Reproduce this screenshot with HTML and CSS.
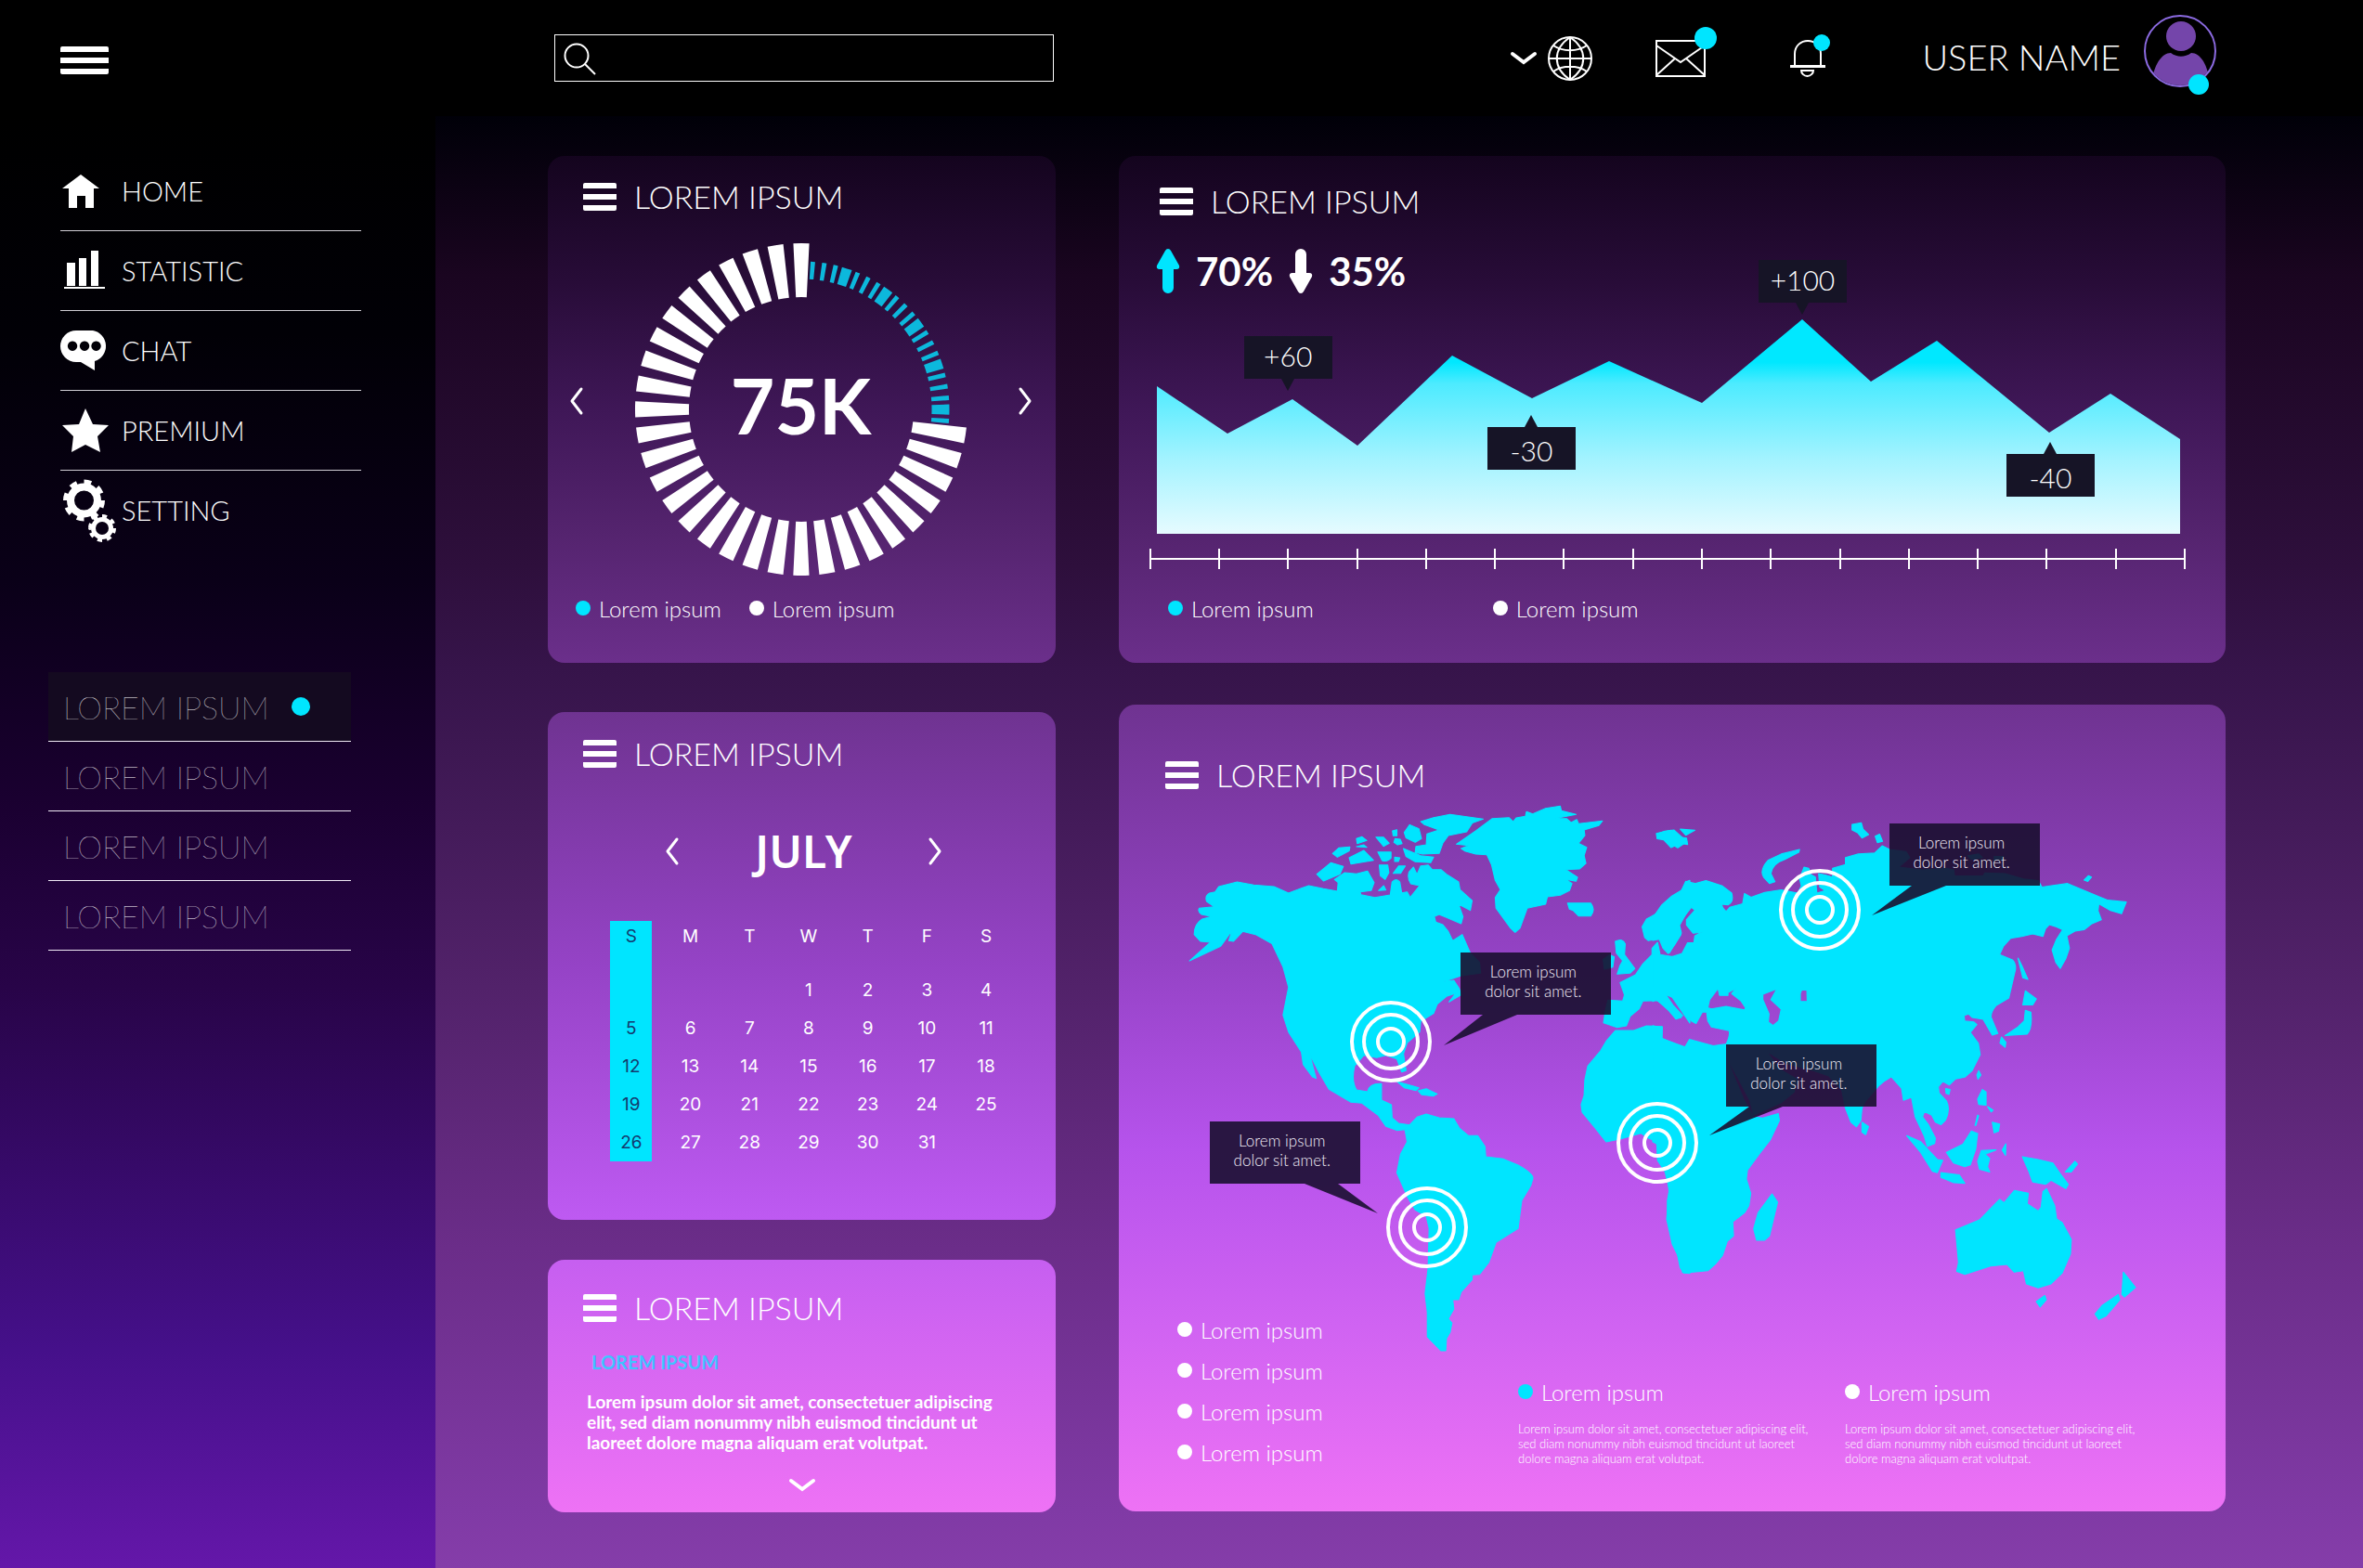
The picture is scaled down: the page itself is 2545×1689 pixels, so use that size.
FILE: index.html
```html
<!DOCTYPE html>
<html lang="en">
<head>
<meta charset="utf-8">
<title>Dashboard</title>
<link rel="stylesheet" href="styles.css">
</head>
<body>
<div class="app">
  <header class="topbar">
    <button class="icon-button topbar-menu" aria-label="Menu"><span class="burger burger-wide"></span></button>
    <form class="search" role="search">
      <svg class="search-icon" viewBox="0 0 36 36" aria-hidden="true"><circle cx="15" cy="15" r="12.5"/><path d="M24 24l11 11"/></svg>
      <input class="search-input" type="search" aria-label="Search">
    </form>
    <div class="topbar-tools">
      <button class="icon-button language" aria-label="Language">
        <svg class="chevron-down" viewBox="0 0 28 14" aria-hidden="true"><path d="M2 2l12 9 12-9"/></svg>
        <svg class="globe" viewBox="0 0 48 48" aria-hidden="true"><circle cx="24" cy="24" r="23"/><path d="M24 1v46M1 24h46M24 1C5 14 5 34 24 47M24 1c19 13 19 33 0 46M6 10c10 7 26 7 36 0M6 38c10-7 26-7 36 0"/></svg>
      </button>
      <button class="icon-button mail" aria-label="Messages">
        <svg viewBox="0 0 54 40" aria-hidden="true"><path d="M1 1h52v38H1zM1 6l26 18L53 6M1 38l20-18M53 38L33 20"/></svg>
        <span class="badge badge-mail"></span>
      </button>
      <button class="icon-button bell" aria-label="Notifications">
        <svg viewBox="0 0 40 40" aria-hidden="true"><path d="M6 28V15C6 6 13 1 20 1s14 5 14 14v13"/><path class="bell-rim" d="M1 28.500h38"/><path d="M13 33h13c0 3-3 6-6.500 6S13 36 13 33z"/></svg>
        <span class="badge badge-bell"></span>
      </button>
      <a class="user" href="#profile">
        <span>USER NAME</span>
        <span class="avatar">
          <svg viewBox="0 0 78 78" aria-hidden="true"><defs><clipPath id="face"><circle cx="39" cy="39" r="37"/></clipPath></defs><g clip-path="url(#face)"><circle cx="40" cy="23" r="16"/><path d="M8 80C9 55 19 41 29 41c7 5 15 5 22 0 10 0 20 14 20 39z"/></g><circle class="avatar-ring" cx="39" cy="39" r="38"/></svg>
          <span class="badge badge-user"></span>
        </span>
      </a>
    </div>
  </header>

  <aside class="sidebar">
    <nav aria-label="Main">
      <ul class="nav">
        <li><a href="#home"><svg viewBox="65 170 60 52" aria-hidden="true"><path d="M87 178l20 15h-6v21h-9v-13h-9v13h-9v-21h-7z"/></svg>HOME</a></li>
        <li><a href="#statistic"><svg viewBox="65 260 60 52" aria-hidden="true"><path d="M72 277h9v25h-9zM85 272h8v30h-8zM98 264h8v38h-8zM69 303h44v2H69z"/></svg>STATISTIC</a></li>
        <li><a href="#chat"><svg viewBox="65 352 60 52" aria-hidden="true"><path fill-rule="evenodd" d="M82 356h18a17 17 0 0 1 2 33l0 10-15-9h-5a17 17 0 0 1 0-34zM78 367.500a5.200 5.200 0 1 0 .1 0zM91 367.500a5.200 5.200 0 1 0 .1 0zM103.500 367.500a5.200 5.200 0 1 0 .1 0z"/></svg>CHAT</a></li>
        <li><a href="#premium"><svg viewBox="65 433 60 52" aria-hidden="true"><path d="M92 435l8 17 17 1-12 12 3 17-16-8-15 8 2-17-12-12 18-1z"/></svg>PREMIUM</a></li>
        <li><a href="#setting"><svg class="gears" viewBox="65 518 60 72" aria-hidden="true"><circle cx="90.500" cy="543" r="14.500" stroke-width="8"/><circle cx="90.500" cy="543" r="20" stroke-width="5" pathLength="16" stroke-dasharray="1 1"/><circle cx="110" cy="573" r="9.500" stroke-width="5"/><circle cx="110" cy="573" r="13" stroke-width="4" pathLength="16" stroke-dasharray="1 1"/></svg>SETTING</a></li>
      </ul>
    </nav>
    <nav aria-label="Sections">
      <ul class="subnav">
        <li><a class="current" href="#one">LOREM IPSUM<span class="dot"></span></a></li>
        <li><a href="#two">LOREM IPSUM</a></li>
        <li><a href="#three">LOREM IPSUM</a></li>
        <li><a href="#four">LOREM IPSUM</a></li>
      </ul>
    </nav>
  </aside>

  <main class="content">
    <div class="column column-narrow">
      <section class="card card-gauge">
        <h2 class="card-title"><span class="burger"></span>LOREM IPSUM</h2>
        <div class="gauge">
          <button class="icon-button" aria-label="Previous"><svg class="chevron-side" viewBox="0 0 14 30" aria-hidden="true"><path d="M12 2L2 15l10 13"/></svg></button>
          <div class="gauge-dial">
            <svg viewBox="-180 -179 360 358" aria-hidden="true">
              <path class="gauge-rest" pathLength="91.800" d="M9.420-149.700A150 150 0 0 1 149.330 14.120"/>
              <path class="gauge-value" pathLength="266.500" d="M149.100 16.330A150 150 0 1 1 7.200-149.830"/>
            </svg>
            <strong class="gauge-number">75K</strong>
          </div>
          <button class="icon-button" aria-label="Next"><svg class="chevron-side" viewBox="0 0 14 30" aria-hidden="true"><path d="M2 2l10 13L2 28"/></svg></button>
        </div>
        <ul class="legend legend-gauge">
          <li><span class="dot dot-cyan"></span>Lorem ipsum</li>
          <li><span class="dot"></span>Lorem ipsum</li>
        </ul>
      </section>

      <section class="card card-calendar">
        <h2 class="card-title"><span class="burger"></span>LOREM IPSUM</h2>
        <div class="month">
          <button class="icon-button" aria-label="Previous month"><svg class="chevron-side" viewBox="0 0 14 30" aria-hidden="true"><path d="M12 2L2 15l10 13"/></svg></button>
          <h3>JULY</h3>
          <button class="icon-button" aria-label="Next month"><svg class="chevron-side" viewBox="0 0 14 30" aria-hidden="true"><path d="M2 2l10 13L2 28"/></svg></button>
        </div>
        <table class="days">
          <thead><tr><th>S</th><th>M</th><th>T</th><th>W</th><th>T</th><th>F</th><th>S</th></tr></thead>
          <tbody>
            <tr><td></td><td></td><td></td><td>1</td><td>2</td><td>3</td><td>4</td></tr>
            <tr><td>5</td><td>6</td><td>7</td><td>8</td><td>9</td><td>10</td><td>11</td></tr>
            <tr><td>12</td><td>13</td><td>14</td><td>15</td><td>16</td><td>17</td><td>18</td></tr>
            <tr><td>19</td><td>20</td><td>21</td><td>22</td><td>23</td><td>24</td><td>25</td></tr>
            <tr><td>26</td><td>27</td><td>28</td><td>29</td><td>30</td><td>31</td><td></td></tr>
          </tbody>
        </table>
      </section>

      <section class="card card-note">
        <h2 class="card-title"><span class="burger"></span>LOREM IPSUM</h2>
        <h3 class="note-heading">LOREM IPSUM</h3>
        <p class="note-text">Lorem ipsum dolor sit amet, consectetuer adipiscing<br>elit, sed diam nonummy nibh euismod tincidunt ut<br>laoreet dolore magna aliquam erat volutpat.</p>
        <button class="icon-button note-more" aria-label="Show more"><svg class="chevron-down" viewBox="0 0 28 14" aria-hidden="true"><path d="M2 2l12 9 12-9"/></svg></button>
      </section>
    </div>

    <div class="column column-wide">
      <section class="card card-chart">
        <h2 class="card-title"><span class="burger"></span>LOREM IPSUM</h2>
        <div class="trends">
          <svg class="trend-up" viewBox="0 0 24 48" aria-hidden="true"><path d="M12 0q2 0 3 2l9 16q1 4-3 4h-3v20a6 6 0 0 1-12 0V22H3q-4 0-3-4L9 2q1-2 3-2z"/></svg>
          <strong>70%</strong>
          <svg class="trend-down" viewBox="0 0 24 48" aria-hidden="true"><path d="M12 48q2 0 3-2l9-16q1-4-3-4h-3V6a6 6 0 0 0-12 0v20H3q-4 0-3 4l9 16q1 2 3 2z"/></svg>
          <strong>35%</strong>
        </div>
        <div class="plot">
          <svg viewBox="1205 316 1192 304" aria-hidden="true">
            <defs><linearGradient id="area" gradientUnits="userSpaceOnUse" x1="0" y1="344" x2="0" y2="575"><stop offset="0.200" stop-color="#00e8ff"/><stop offset="0.300" stop-color="#4debff"/><stop offset="0.650" stop-color="#a3f3ff"/><stop offset="1" stop-color="#e6fbff"/></linearGradient></defs>
            <path fill="url(#area)" d="M1246 575V416L1322 467L1392 430L1462 480L1564 383L1650 429L1733 389L1833 434L1941 344L2015 411L2086 367L2207 466L2273 424L2348 473V575z"/>
            <path class="axis" d="M1238 602H2354M1239 591v22M1313 591v22M1387 591v22M1462 591v22M1536 591v22M1610 591v22M1684 591v22M1759 591v22M1833 591v22M1907 591v22M1982 591v22M2056 591v22M2130 591v22M2204 591v22M2279 591v22M2353 591v22"/>
          </svg>
          <span class="tip tip-a">+60</span>
          <span class="tip tip-b tip-below">-30</span>
          <span class="tip tip-c">+100</span>
          <span class="tip tip-d tip-below">-40</span>
        </div>
        <ul class="legend legend-chart">
          <li><span class="dot dot-cyan"></span>Lorem ipsum</li>
          <li><span class="dot"></span>Lorem ipsum</li>
        </ul>
      </section>

      <section class="card card-map">
        <h2 class="card-title"><span class="burger"></span>LOREM IPSUM</h2>
        <div class="map">
          <svg viewBox="1205 860 1192 550" aria-hidden="true">
            <g class="land">
              <g transform="translate(1200 750) scale(.39541 .33333)">
                <path d="M205 855L262 795L235 792L218 770Q218 735 240 720L265 712L238 705Q226 695 232 685L272 680L252 663Q246 645 260 636L275 632L285 615L335 600L380 610L435 615L475 636L510 620L530 612L570 622L608 630L610 602L600 592L628 570L660 574L690 565L708 602L700 628L670 632L672 641L710 650L752 642L757 600Q768 585 778 600L783 635L798 632L806 650L832 612L808 606Q798 590 803 568L815 552L825 576L835 548L855 545L866 560L890 560L905 575L938 600L942 625L975 660L970 692L938 672L950 712L945 735L905 715L885 705L872 712L876 730L895 738L910 760L922 790L948 770L970 830L995 860L998 895L945 903L898 922L925 918L940 945L945 965L912 988L930 960L905 970L880 995L870 1025L835 1050L832 1085L798 1120L788 1155L795 1210L783 1214L770 1172L740 1160L715 1168L680 1160L655 1195Q645 1240 660 1272L690 1278Q695 1250 728 1252L728 1305L755 1320L757 1362L775 1380L805 1385L825 1360L850 1350L885 1362L925 1365L940 1395L965 1420L990 1420L1010 1455L1012 1488L1060 1495L1100 1515Q1145 1545 1140 1560L1135 1580L1110 1630L1100 1720L1040 1765L1020 1830L995 1868L975 1870L975 1885L945 1925L938 1950L922 1950L925 1980L910 2012L920 2025L915 2055L905 2075L903 2115L890 2115L853 2070L853 1990L847 1930L855 1850L858 1720L850 1680L820 1660L800 1620L770 1540L780 1480L798 1440L792 1400L770 1403L740 1390L720 1355L675 1315L645 1312L585 1270L558 1215L532 1155L550 1235L540 1230L515 1190L510 1150L475 1085L460 1030L475 940L460 875L430 800L385 770L350 760L325 792L312 790L322 755L290 808z"/>
                <path d="M932 478L985 435L1030 395L1075 392L1087 405L1095 393L1120 388L1123 373L1140 380L1175 362L1215 355L1218 370L1258 382L1200 395L1232 395L1245 408L1260 398L1265 412L1330 403L1320 418L1280 432L1282 450L1265 475L1287 488L1280 515L1285 540L1268 558L1230 560L1262 585L1258 598L1230 592L1247 605L1240 628L1215 643L1180 648L1175 672L1125 685L1105 750L1092 763L1080 750L1040 685L1038 650L1052 625L1038 595L1028 545L1015 512L985 510L955 500L945 492L965 482z"/>
                <path d="M835 405L870 392L915 382L1005 397L975 410L960 438L910 450L895 475L885 508L840 510L820 505L822 485L850 480L852 445L885 432L845 415zM790 440L805 415L830 428L837 460L820 472L795 458zM758 435l12-4v20h-10zM713 455l20 0l16 20l-15 10zM765 460l14 2l5 14l-12 4l-10-8zM660 460l15-6l13 12l-26 10zM660 486l20-6l8 8zM595 508L612 490L642 487L640 500L608 520zM640 522L680 498L706 530L645 542zM718 503h36v20q-10 14-24 8zM764 520l14 2l-4 12h-10zM788 492L835 515L870 520L862 538L820 535L795 518zM552 575L590 538L624 550L615 575L570 597zM722 545L745 545L748 570L738 592L725 580zM760 572L775 548L793 548L780 572zM720 628l14-16l6 14zM770 1245L830 1265L822 1274L790 1265zM828 1275L850 1268L880 1285L870 1292L838 1288zM1235 668L1298 668Q1312 690 1298 710L1265 710L1250 692L1240 688zM1365 792Q1385 780 1392 800L1390 835L1418 880L1405 895L1370 898L1378 870L1385 855L1368 830zM1332 850L1350 835L1362 842L1358 875L1335 882zM1478 445L1500 436L1525 432L1560 470L1535 490L1500 465z"/>
                <path d="M1568 595L1556 600L1540 640L1505 680L1480 700L1450 720L1438 745L1445 780L1455 790L1490 780L1512 830L1545 765L1540 740L1568 680zM1568 825L1530 843L1487 835L1480 795L1465 815L1465 835L1440 865L1420 900L1378 925L1390 965L1385 985L1345 982L1338 1015L1333 1055L1370 1070L1395 1065L1405 1035L1430 1010L1440 985L1480 983L1510 1015L1530 1043L1545 1038L1530 1010L1508 985L1502 963L1520 973L1568 1056zM1568 1120L1553 1135L1492 1105L1493 1067L1450 1065L1415 1080L1365 1080L1340 1115L1325 1145L1290 1195L1282 1240L1280 1290L1272 1320L1275 1345L1310 1395L1340 1440L1380 1430L1435 1412L1450 1425L1478 1440L1480 1500L1500 1535L1512 1590L1505 1690L1520 1770L1545 1830L1548 1862L1568 1865z"/>
              </g>
              <g transform="translate(1780 830) scale(.39541 .38265)">
                <path fill-rule="evenodd" d="M0 415L25 378L50 355L90 330L90 312L115 318L145 310L190 325L215 345Q222 370 205 378L187 376L192 388L200 397L210 385L245 375L250 346L268 357L305 343L350 336L395 345L405 325L400 305L412 272L425 275L430 292L443 300L447 345L470 338L455 328L452 290L470 294L490 300L490 275L525 265L525 245L560 235L605 232L625 212L645 222L690 228L700 245L670 272L735 280L800 275L820 280L822 297L900 297L905 288L960 290L1010 305L1050 310L1060 328L1130 318L1165 333L1215 355L1240 365L1290 370L1277 403L1245 393L1215 375L1213 395L1222 420L1195 432L1175 448L1150 452L1128 465L1135 500L1125 530L1110 557L1098 540L1088 505L1100 475L1117 448L1100 440L1080 434L1070 445L1063 467L1035 460L1005 467L975 472L955 495L945 518L980 533Q990 545 988 560L970 640L935 662Q920 680 922 695L940 740L925 745L900 700L870 695L860 685L848 690L850 705L875 708L883 715L865 737L887 768L892 800L870 845L850 863L825 868L808 885L790 875L778 890L780 908L800 930Q812 955 797 985L785 997L770 990L760 970L740 960L735 975L750 995L770 1035L768 1050L748 1058L740 1030L715 975L705 920L683 928L678 895L650 862L630 875L615 888L580 930L570 950L567 985L555 1003L540 990L525 950L515 900L480 860L440 845L365 825L310 790L345 840L395 870L385 905L350 935L275 970L265 930L235 870L200 805L225 870L250 930L270 965L275 975L300 978L342 966L345 985L320 1040L290 1080L258 1125L255 1150L267 1190L262 1225L250 1245L218 1270L220 1310L203 1325L190 1365L170 1390L150 1408L85 1414L75 1400L62 1335L40 1260L40 1210L45 1185L35 1120L20 1080L10 1050L0 1045V718L25 725L25 755L88 778L100 757L165 775L200 770Q212 745 208 732L160 722L150 705L147 680L135 680L118 712L105 705L80 665L60 640L35 630L55 660L82 690L65 698L40 670L10 645L0 650V525L50 525L80 515L95 485L112 485L115 465L135 455L110 458L92 435L92 420L115 393L105 385L75 425L68 438L77 462L60 490L42 515L28 500L18 475L0 478zM150 668L155 645L178 613L182 633L205 633L205 625L228 612L215 628L240 648L253 668L250 674L200 664L160 671zM300 630L338 615L322 645L350 672L343 705L328 718L315 708L317 685L300 645zM402 628L406 617L420 618L421 650H402z"/>
                <path d="M10 177L50 168L60 185L92 190L95 208L75 205L50 217L30 195L12 192zM75 165L115 168L90 182zM400 222L350 235L315 252Q290 280 302 300L318 318L333 313L322 290Q325 262 360 250L398 230zM543 152l25-5l5 18l15 15l-18 10l-12-15l-15-8zM606 185l12-6l8 20l-14 4zM858 240l30-5l10 10l-30 5zM930 242h25v10h-25zM1175 308l12-12l8 4l-10 12zM995 528L1005 548L1022 588L1008 583zM1015 620L1045 643L1035 660L1008 660zM1015 675L1030 680Q1035 725 1020 742L960 746L995 722L1012 705zM950 750l12 15l-2 14l-14-12zM888 845l6 12l-8 12l-3-12zM798 895l12 3l-3 14l-8-3zM885 925L898 898L908 905L908 942L888 940zM912 946l15 10l-5 5zM925 990L945 995L942 1015L930 1020zM885 970l3 2l-8 27h-2zM570 990L588 1002L580 1025L570 1018zM692 1028L730 1045L775 1095L790 1097L775 1132L762 1128L730 1075zM785 1132L835 1138L850 1162L820 1160L785 1145zM800 1075L845 1052L868 1015L885 1022L880 1065L865 1110L850 1115L820 1105zM885 1100L895 1070L935 1068L905 1080L918 1092L912 1115L918 1130L890 1122zM952 1068l10-17l-1 32zM1007 1087L1050 1095L1090 1105L1110 1135L1132 1165L1125 1177L1085 1153L1070 1165L1035 1158L1025 1130zM1124 1130L1150 1100L1157 1108L1140 1130zM325 1192L340 1215L318 1310L305 1322L283 1322L275 1290L287 1245zM825 1293L890 1265L945 1207L957 1217L985 1182L1023 1190L1020 1220L1050 1240L1058 1230L1063 1185L1073 1177L1095 1225L1100 1262L1115 1272L1140 1320L1138 1360L1115 1415L1085 1445L1050 1456L1018 1445L1010 1408L985 1412L965 1390L920 1395L850 1418L828 1410L833 1385zM1045 1495L1068 1478L1072 1490L1055 1510zM1282 1412L1315 1455L1285 1482L1278 1475zM1268 1475L1272 1490L1235 1535L1215 1545L1205 1530L1225 1505z"/>
              </g>
            </g>
            <g class="rings">
              <g><circle cx="1498" cy="1122" r="42"/><circle cx="1498" cy="1122" r="29"/><circle cx="1498" cy="1122" r="14"/></g>
              <g><circle cx="1960" cy="980" r="42"/><circle cx="1960" cy="980" r="29"/><circle cx="1960" cy="980" r="14"/></g>
              <g><circle cx="1785" cy="1231" r="42"/><circle cx="1785" cy="1231" r="29"/><circle cx="1785" cy="1231" r="14"/></g>
              <g><circle cx="1537" cy="1322" r="42"/><circle cx="1537" cy="1322" r="29"/><circle cx="1537" cy="1322" r="14"/></g>
            </g>
            <path class="tails" d="M1597 1093L1555 1126L1634 1093zM2059 954L2016 986L2096 954zM1884 1192L1841 1223L1920 1192zM1405 1275L1484 1307L1441 1275z"/>
          </svg>
          <p class="callout callout-a">Lorem ipsum<br>dolor sit amet.</p>
          <p class="callout callout-b">Lorem ipsum<br>dolor sit amet.</p>
          <p class="callout callout-c">Lorem ipsum<br>dolor sit amet.</p>
          <p class="callout callout-d">Lorem ipsum<br>dolor sit amet.</p>
        </div>
        <div class="map-footer">
          <ul class="legend legend-map">
            <li><span class="dot"></span>Lorem ipsum</li>
            <li><span class="dot"></span>Lorem ipsum</li>
            <li><span class="dot"></span>Lorem ipsum</li>
            <li><span class="dot"></span>Lorem ipsum</li>
          </ul>
          <div class="map-note">
            <h3><span class="dot dot-cyan"></span>Lorem ipsum</h3>
            <p>Lorem ipsum dolor sit amet, consectetuer adipiscing elit,<br>sed diam nonummy nibh euismod tincidunt ut laoreet<br>dolore magna aliquam erat volutpat.</p>
          </div>
          <div class="map-note">
            <h3><span class="dot"></span>Lorem ipsum</h3>
            <p>Lorem ipsum dolor sit amet, consectetuer adipiscing elit,<br>sed diam nonummy nibh euismod tincidunt ut laoreet<br>dolore magna aliquam erat volutpat.</p>
          </div>
        </div>
      </section>
    </div>
  </main>
</div>
</body>
</html>
```

FILE: styles.css
```css
* { box-sizing: border-box; }

body {
  margin: 0;
  background: #000;
  color: #fff;
  font-family: Lato, "Open Sans", sans-serif;
  font-weight: 300;
}

h2, h3, p, ul { margin: 0; padding: 0; font-weight: inherit; }
ul { list-style: none; }
a { color: inherit; text-decoration: none; }
svg { display: block; overflow: visible; }

.app {
  display: grid;
  grid-template-columns: 469px 1fr;
  grid-template-rows: 125px auto;
  min-height: 100vh;
}

.icon-button {
  position: relative;
  display: flex;
  align-items: center;
  padding: 0;
  border: 0;
  background: none;
  color: inherit;
  cursor: pointer;
}
.icon-button svg { fill: none; stroke: #fff; stroke-width: 2; }
.icon-button .chevron-down { width: 28px; height: 14px; stroke-width: 4; stroke-linecap: round; }
.icon-button .chevron-side { width: 14px; height: 30px; stroke-width: 3; stroke-linecap: round; stroke-linejoin: round; }

.burger {
  display: block;
  width: 36px;
  height: 30px;
  background:
    linear-gradient(#fff, #fff) top / 100% 6px no-repeat,
    linear-gradient(#fff, #fff) center / 100% 6px no-repeat,
    linear-gradient(#fff, #fff) bottom / 100% 6px no-repeat;
  border-radius: 2px;
}
.burger-wide { width: 52px; }

.dot {
  flex: none;
  width: 16px;
  height: 16px;
  border-radius: 50%;
  background: #fff;
}
.dot-cyan { background: #00e5ff; }

.badge { position: absolute; border-radius: 50%; background: #00e5ff; }
.badge-mail { width: 24px; height: 24px; top: -14px; right: -12px; }
.badge-bell { width: 18px; height: 18px; top: -6px; right: -4px; }
.badge-user { width: 22px; height: 22px; right: 8px; bottom: -8px; }

/* Top bar */
.topbar {
  grid-column: 1 / -1;
  display: grid;
  grid-template-columns: 532px 538px 1fr;
  align-items: center;
  padding: 0 158px 0 65px;
  background: #000;
}
.topbar-menu { justify-self: start; padding-top: 5px; }
.search {
  display: flex;
  align-items: center;
  height: 51px;
  padding-left: 8px;
  border: 1px solid #fff;
}
.search-icon { width: 36px; height: 36px; fill: none; stroke: #fff; stroke-width: 2; }
.search-input {
  flex: 1;
  min-width: 0;
  height: 44px;
  padding: 0 12px;
  border: 0;
  outline: 0;
  background: none;
  color: #fff;
  font: inherit;
  font-size: 24px;
}
.topbar-tools { display: flex; align-items: center; justify-content: flex-end; }
.language { gap: 12px; margin-right: 68px; }
.language .globe { width: 48px; height: 48px; }
.mail { margin-right: 90px; }
.mail svg { width: 54px; height: 40px; }
.bell { margin-right: 103px; }
.bell svg { width: 40px; height: 40px; }
.bell .bell-rim { stroke-width: 3; }
.user { display: flex; align-items: center; gap: 25px; margin-bottom: 16px; font-size: 38px; line-height: 78px; }
.user > :first-child { padding-top: 12px; }
.avatar { position: relative; }
.avatar svg { width: 78px; height: 78px; fill: #7445aa; }
.avatar .avatar-ring { fill: none; stroke: #8b6ae0; stroke-width: 2; }

/* Sidebar */
.sidebar {
  padding: 38px 80px 60px 52px;
  background: linear-gradient(#000 0, #010006 15%, #0a0018 32%, #1a0030 47%, #280448 60%, #45108a 85%, #6417a9 100%);
}
.nav { margin-left: 13px; }
.nav li + li { border-top: 1px solid #d0ced4; }
.nav a { display: flex; align-items: center; gap: 6px; height: 85px; font-size: 29px; }
.nav svg { width: 60px; height: 52px; fill: #fff; }
.nav .gears { height: 72px; fill: none; stroke: #fff; }
.subnav { width: 326px; margin-top: 132px; }
.subnav a {
  display: flex;
  align-items: center;
  gap: 24px;
  height: 75px;
  padding-left: 16px;
  border-bottom: 1px solid #f0eaf5;
  color: #fff;
  font-size: 34px;
  font-weight: 100;
}
.subnav .current { background: #140a20; }
.subnav .dot { width: 20px; height: 20px; background: #00e5ff; }

/* Cards */
.content {
  display: grid;
  grid-template-columns: 547fr 1192fr;
  gap: 68px;
  padding: 43px 148px 60px 121px;
  background: linear-gradient(#000008 0, #1a0520 11%, #2e0f3c 31%, #36144a 38%, #52226a 60%, #6b2d89 78%, #803aa5 96%, #853da9 100%);
}
.column { display: flex; flex-direction: column; min-width: 0; }
.card { border-radius: 18px; }
.card-title { display: flex; align-items: center; gap: 19px; height: 36px; padding-left: 38px; font-size: 34px; line-height: 36px; }
.card-gauge, .card-chart { background: linear-gradient(#14041e 0, #280c38 25%, #3f1757 50%, #55246f 75%, #6b2f8b 100%); }
.card-gauge { padding: 26px 0 42px; }
.card-calendar { margin-top: 53px; padding: 27px 0 63px; background: linear-gradient(#6f3391, #9543c6 50%, #be5af2); }
.card-note { flex: 1; margin-top: 43px; padding: 34px 0 20px; background: linear-gradient(#c65ff0, #ee72f5); }
.card-chart { padding: 31px 0 42px; }
.card-map { margin-top: 45px; padding: 58px 0 42px; background: linear-gradient(#6f3391 0, #9543c6 32%, #b653ec 55%, #d063f2 77%, #ee72f5 100%); }
.column-wide .card-title { padding-left: 44px; }
.column-wide .card-map .card-title { padding-left: 50px; }

.legend { display: flex; }
.legend li, .map-note h3 { display: flex; align-items: center; gap: 9px; height: 32px; font-size: 24px; }

/* Gauge */
.gauge { display: flex; align-items: center; justify-content: space-between; margin-top: 32px; padding: 0 26px 0 24px; }
.gauge .icon-button { padding-bottom: 18px; }
.gauge-dial { display: grid; place-items: center; }
.gauge-dial svg, .gauge-number { grid-area: 1 / 1; }
.gauge-dial svg { width: 360px; height: 358px; fill: none; }
.gauge-value { stroke: #fff; stroke-width: 58; stroke-dasharray: 5.5 3.5; }
.gauge-rest { stroke: #0cb8dc; stroke-width: 19; stroke-dasharray: 1.8 2.7 1.8 2.7 1.8 1.6 4 1.6; }
.gauge-number { padding-bottom: 10px; font-size: 82px; font-weight: 700; line-height: 82px; }
.legend-gauge { gap: 30px; margin-top: 19px; margin-bottom: 1px; padding-left: 30px; }

/* Calendar */
.month { display: flex; align-items: center; justify-content: center; gap: 82px; height: 50px; margin-top: 62px; padding-left: 4px; }
.month h3 { font: 600 48px/50px "Noto Sans", sans-serif; }
.days { width: 446px; margin: 50px 0 0 58px; border-collapse: collapse; table-layout: fixed; font-family: Inter, sans-serif; font-size: 19px; text-align: center; }
.days th { height: 54px; padding: 0; font-weight: 400; line-height: 34px; vertical-align: top; }
.days td { height: 41px; padding: 0; font-weight: 400; }
.days th:first-child, .days td:first-child { background: linear-gradient(#00e5ff, #00e5ff) center / 45px 100% no-repeat; color: #143a6e; }

/* Note */
.note-heading { margin: 28px 0 20px 47px; color: #3ec4ff; font-size: 20px; font-weight: 700; line-height: 24px; }
.note-text { padding: 0 42px; font-size: 19px; font-weight: 700; line-height: 22px; }
.note-more { margin: 28px auto 0; }

/* Area chart */
.trends { display: flex; align-items: center; gap: 18px; height: 48px; margin-top: 33px; padding-left: 41px; font-size: 42px; }
.trends svg { width: 24px; height: 48px; }
.trend-up { fill: #00e5ff; }
.trend-down { fill: #fff; }
.trends strong { font-weight: 700; }
.plot { position: relative; }
.plot svg { width: 100%; }
.axis { fill: none; stroke: #fff; stroke-width: 2; }
.tip {
  position: absolute;
  width: 95px;
  height: 46px;
  background: #161426;
  font-size: 30px;
  line-height: 42px;
  text-align: center;
}
.tip::after {
  content: "";
  position: absolute;
  top: 100%;
  left: 50%;
  margin-left: -7px;
  border: 7px solid transparent;
  border-top: 13px solid #161426;
  border-bottom: 0;
}
.tip-below { line-height: 50px; }
.tip-below::after { top: auto; bottom: 100%; border-top: 0; border-bottom: 13px solid #161426; }
.tip-a { left: 11.3%; top: 15%; }
.tip-b { left: 33.3%; top: 47.4%; }
.tip-c { left: 57.8%; top: -12%; }
.tip-d { left: 80.2%; top: 57%; }
.legend-chart { gap: 193px; margin-top: 19px; margin-bottom: 1px; padding-left: 53px; }

/* World map */
.map { position: relative; margin-top: 7px; }
.map svg { width: 100%; }
.land { fill: #00e5ff; stroke: #00e5ff; stroke-width: 3; stroke-linejoin: round; }
.rings { fill: none; stroke: #fff; stroke-width: 4; }
.tails { fill: #1a1030; fill-opacity: .9; }
.callout {
  position: absolute;
  width: 162px;
  height: 67px;
  padding: 10px 6px 0 0;
  background: rgba(26, 16, 48, .9);
  color: #f2eef8;
  font-size: 17px;
  line-height: 21px;
  text-align: center;
}
.callout-a { left: 30.9%; top: 30.2%; }
.callout-b { left: 69.6%; top: 4.9%; }
.callout-c { left: 54.9%; top: 48.1%; }
.callout-d { left: 8.2%; top: 63.3%; }
.map-footer { display: grid; grid-template-columns: 367px 352px 1fr; padding-left: 63px; }
.legend-map { flex-direction: column; }
.legend-map li { height: 44px; }
.map-note { padding-top: 73px; }
.map-note p { margin-top: 16px; font-size: 13px; line-height: 16px; }
```
